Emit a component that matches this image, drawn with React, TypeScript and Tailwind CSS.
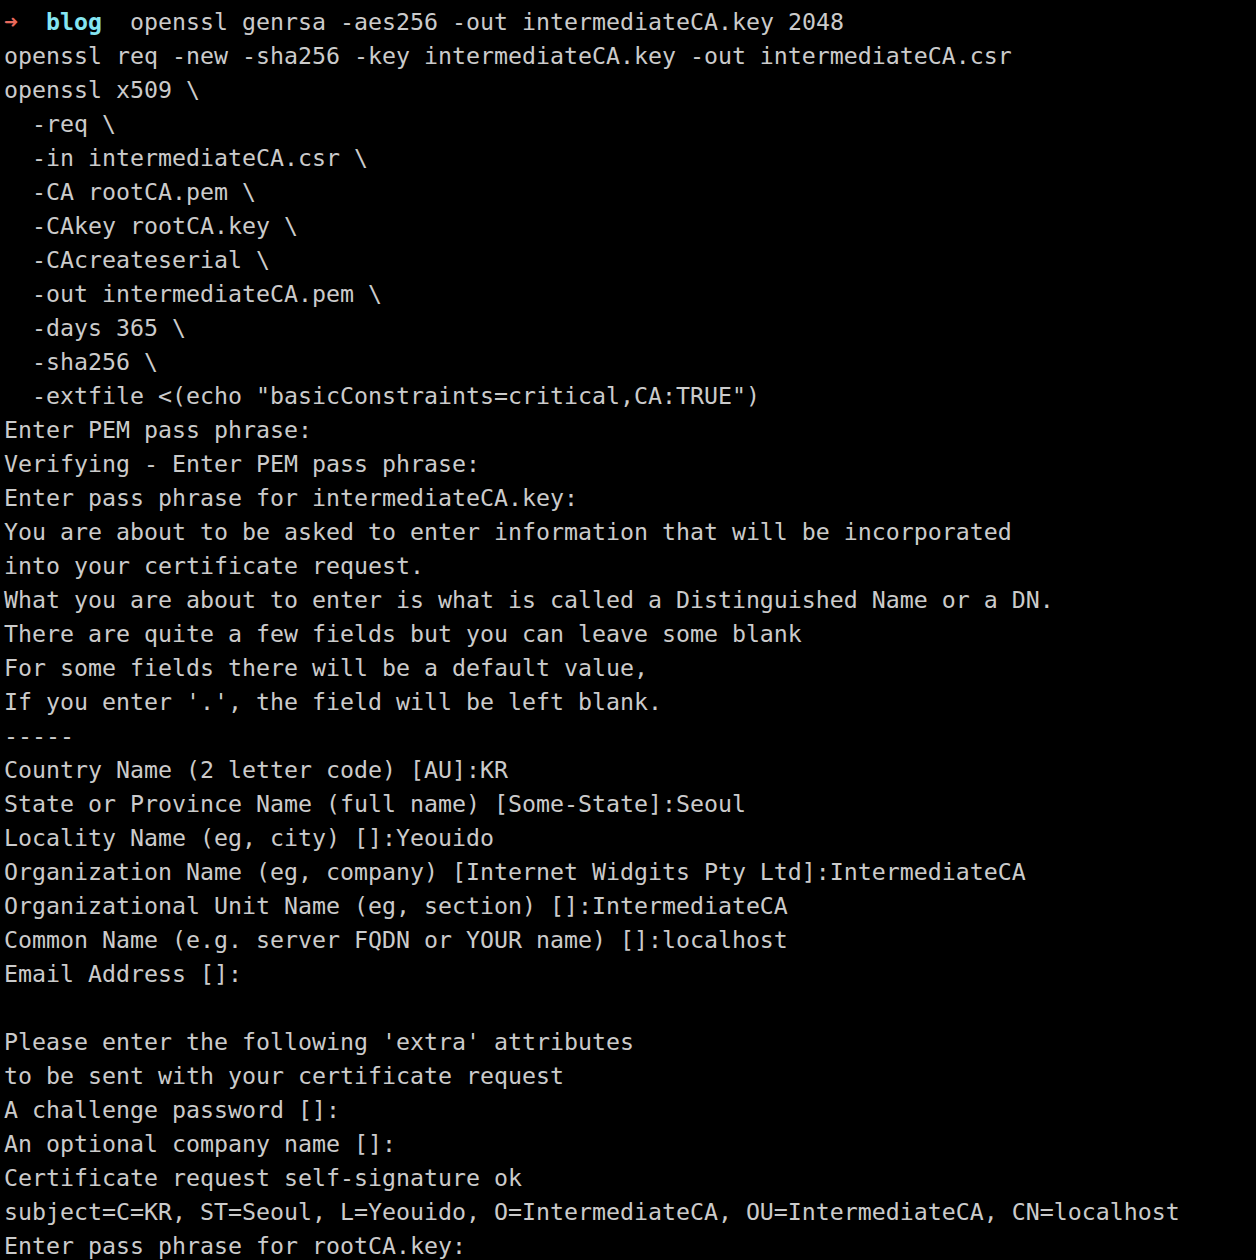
import React from 'react';

const lines = [
  'openssl req -new -sha256 -key intermediateCA.key -out intermediateCA.csr',
  'openssl x509 \\',
  '  -req \\',
  '  -in intermediateCA.csr \\',
  '  -CA rootCA.pem \\',
  '  -CAkey rootCA.key \\',
  '  -CAcreateserial \\',
  '  -out intermediateCA.pem \\',
  '  -days 365 \\',
  '  -sha256 \\',
  '  -extfile <(echo "basicConstraints=critical,CA:TRUE")',
  'Enter PEM pass phrase:',
  'Verifying - Enter PEM pass phrase:',
  'Enter pass phrase for intermediateCA.key:',
  'You are about to be asked to enter information that will be incorporated',
  'into your certificate request.',
  'What you are about to enter is what is called a Distinguished Name or a DN.',
  'There are quite a few fields but you can leave some blank',
  'For some fields there will be a default value,',
  "If you enter '.', the field will be left blank.",
  '-----',
  'Country Name (2 letter code) [AU]:KR',
  'State or Province Name (full name) [Some-State]:Seoul',
  'Locality Name (eg, city) []:Yeouido',
  'Organization Name (eg, company) [Internet Widgits Pty Ltd]:IntermediateCA',
  'Organizational Unit Name (eg, section) []:IntermediateCA',
  'Common Name (e.g. server FQDN or YOUR name) []:localhost',
  'Email Address []:',
  '',
  "Please enter the following 'extra' attributes",
  'to be sent with your certificate request',
  'A challenge password []:',
  'An optional company name []:',
  'Certificate request self-signature ok',
  'subject=C=KR, ST=Seoul, L=Yeouido, O=IntermediateCA, OU=IntermediateCA, CN=localhost',
  'Enter pass phrase for rootCA.key:',
];

export default function App() {
  return (
    <div className="w-[1256px] h-[1260px] overflow-hidden bg-black pt-[5px] pl-[4px] font-['DejaVu_Sans_Mono',monospace] text-[23.25px] leading-[34px] text-[#cbcbcb] whitespace-pre">
      <div className="h-[34px]">
        <span className="text-[#e8695c]">➜</span>
        {'  '}
        <span className="font-bold text-[#85e6f2]">blog</span>
        {'  openssl genrsa -aes256 -out intermediateCA.key 2048'}
      </div>
      {lines.map((line, i) => (
        <div key={i} className="h-[34px]">{line}</div>
      ))}
    </div>
  );
}
